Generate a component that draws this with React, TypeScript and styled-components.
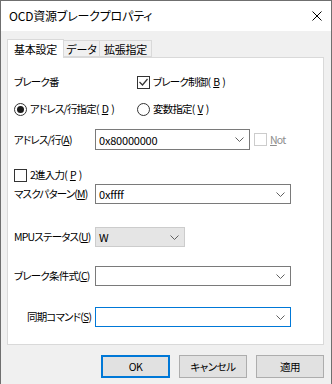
import React from "react";
import styled, { createGlobalStyle } from "styled-components";

const GlobalStyle = createGlobalStyle`
  html, body {
    margin: 0;
    padding: 0;
    background: #ffffff;
  }
  * {
    box-sizing: border-box;
  }
`;

const Window = styled.div`
  width: 332px;
  height: 384px;
  border: 1px solid #6f6f6f;
  border-bottom: none;
  background: #f0f0f0;
  display: flex;
  flex-direction: column;
  font-family: "Noto Sans CJK JP", "Noto Sans", sans-serif;
  font-size: 11px;
  font-feature-settings: "palt";
  letter-spacing: -0.2px;
  color: #000;
  overflow: hidden;
`;

const TitleBar = styled.div`
  height: 30px;
  flex: none;
  background: #fff;
  display: flex;
  align-items: center;
  padding-left: 8px;
  padding-right: 9px;
  justify-content: space-between;
`;

const Title = styled.span`
  font-size: 12px;
  line-height: 14px;
`;

const Client = styled.div`
  flex: 1;
  display: flex;
  flex-direction: column;
  padding: 8px 7px 0 6px;
`;

const TabStrip = styled.div`
  display: flex;
  align-items: flex-end;
  height: 18px;
  position: relative;
  z-index: 1;
`;

const Tab = styled.div<{ $active?: boolean; $w: number }>`
  width: ${(p) => p.$w}px;
  height: ${(p) => (p.$active ? 19 : 17)}px;
  margin-bottom: ${(p) => (p.$active ? -1 : 0)}px;
  background: ${(p) => (p.$active ? "#fff" : "#f0f0f0")};
  border: 1px solid #d9d9d9;
  border-bottom: ${(p) => (p.$active ? "none" : "1px solid #d9d9d9")};
  border-left: ${(p) => (p.$active ? "1px solid #d9d9d9" : "none")};
  display: flex;
  align-items: center;
  justify-content: center;
  line-height: 14px;
`;

const Panel = styled.div`
  height: 288px;
  background: #fff;
  border: 1px solid #d9d9d9;
  padding: 0 6px;
  display: flex;
  flex-direction: column;
`;

const Row = styled.div<{ $mt: number; $h: number }>`
  margin-top: ${(p) => p.$mt}px;
  height: ${(p) => p.$h}px;
  display: flex;
  align-items: center;
`;

const Label = styled.span<{ $w?: number; $indent?: number }>`
  width: ${(p) => p.$w ?? 81}px;
  padding-left: ${(p) => p.$indent ?? 0}px;
  flex: none;
  font-size: 10.5px;
  letter-spacing: -0.8px;
  line-height: 14px;
  white-space: nowrap;
`;

const Option = styled.label<{ $w?: number; $disabled?: boolean }>`
  width: ${(p) => (p.$w ? `${p.$w}px` : "auto")};
  flex: none;
  display: flex;
  align-items: center;
  gap: 3px;
  font-size: 10.5px;
  letter-spacing: -0.8px;
  line-height: 14px;
  white-space: nowrap;
  color: ${(p) => (p.$disabled ? "#8d8d8d" : "#000")};
`;

const Box = styled.span<{ $disabled?: boolean }>`
  width: 13px;
  height: 13px;
  border: 1px solid ${(p) => (p.$disabled ? "#cccccc" : "#333333")};
  background: #fff;
  display: flex;
  align-items: center;
  justify-content: center;
  flex: none;
`;

const Radio = styled.span<{ $on?: boolean }>`
  width: 13px;
  height: 13px;
  border-radius: 50%;
  border: 1px solid #333;
  background: #fff;
  display: flex;
  align-items: center;
  justify-content: center;
  flex: none;
  &::after {
    content: "";
    display: ${(p) => (p.$on ? "block" : "none")};
    width: 7px;
    height: 7px;
    border-radius: 50%;
    background: #1a1a1a;
  }
`;

const Combo = styled.div<{ $w: number; $h?: number; $disabled?: boolean; $focus?: boolean }>`
  width: ${(p) => p.$w}px;
  height: ${(p) => p.$h ?? 20}px;
  flex: none;
  border: 1px solid
    ${(p) => (p.$focus ? "#0078d7" : p.$disabled ? "#cccccc" : "#7a7a7a")};
  background: ${(p) => (p.$disabled ? "#e5e5e5" : "#fff")};
  display: flex;
  align-items: center;
  padding-left: 3px;
  padding-right: 5px;
  line-height: 14px;
`;

const ComboText = styled.span`
  flex: 1;
`;

const ButtonBar = styled.div`
  display: flex;
  justify-content: flex-end;
  gap: 9px;
  margin-top: 10px;
`;

const Button = styled.div<{ $default?: boolean }>`
  width: ${(p) => (p.$default ? 69 : 68)}px;
  height: 23px;
  background: #e1e1e1;
  border: ${(p) => (p.$default ? "2px solid #0078d7" : "1px solid #adadad")};
  display: flex;
  align-items: center;
  justify-content: center;
  font-size: 10.5px;
  letter-spacing: -0.5px;
  line-height: 14px;
`;

const Chevron = () => (
  <svg width="9" height="5" viewBox="0 0 9 5">
    <polyline points="0.5,0.5 4.5,4.5 8.5,0.5" fill="none" stroke="#606060" strokeWidth="1" />
  </svg>
);

const CloseIcon = () => (
  <svg width="10" height="10" viewBox="0 0 10 10">
    <path d="M0.5 0.5 L9.5 9.5 M9.5 0.5 L0.5 9.5" stroke="#000" strokeWidth="1" />
  </svg>
);

const Check = () => (
  <svg width="9" height="8" viewBox="0 0 9 8">
    <polyline points="0.5,4 3.5,7 8.5,1" fill="none" stroke="#333" strokeWidth="1.2" />
  </svg>
);

const App = () => {
  return (
    <>
      <GlobalStyle />
      <Window>
        <TitleBar>
          <Title>OCD資源ブレークプロパティ</Title>
          <CloseIcon />
        </TitleBar>
        <Client>
          <TabStrip>
            <Tab $active $w={57}>基本設定</Tab>
            <Tab $w={36}>データ</Tab>
            <Tab $w={52}>拡張指定</Tab>
          </TabStrip>
          <Panel>
            <Row $mt={14} $h={20}>
              <Label $w={123}>ブレーク番</Label>
              <Option>
                <Box>
                  <Check />
                </Box>
                ブレーク制御(<u>B</u>)
              </Option>
            </Row>
            <Row $mt={7} $h={20}>
              <Option $w={123}>
                <Radio $on />
                アドレス/行指定(<u>D</u>)
              </Option>
              <Option>
                <Radio />
                変数指定(<u>V</u>)
              </Option>
            </Row>
            <Row $mt={10} $h={21}>
              <Label>アドレス/行(<u>A</u>)</Label>
              <Combo $w={155} $h={21}>
                <ComboText>0x80000000</ComboText>
                <Chevron />
              </Combo>
              <Option $disabled style={{ marginLeft: 4 }}>
                <Box $disabled />
                <span>
                  <u>N</u>ot
                </span>
              </Option>
            </Row>
            <Row $mt={18} $h={14}>
              <Option>
                <Box />
                2進入力(<u>P</u>)
              </Option>
            </Row>
            <Row $mt={2} $h={20}>
              <Label>マスクパターン(<u>M</u>)</Label>
              <Combo $w={196}>
                <ComboText>0xffff</ComboText>
                <Chevron />
              </Combo>
            </Row>
            <Row $mt={23} $h={20}>
              <Label>MPUステータス(<u>U</u>)</Label>
              <Combo $w={90} $disabled>
                <ComboText>W</ComboText>
                <Chevron />
              </Combo>
            </Row>
            <Row $mt={19} $h={20}>
              <Label>ブレーク条件式(<u>C</u>)</Label>
              <Combo $w={196}>
                <ComboText />
                <Chevron />
              </Combo>
            </Row>
            <Row $mt={21} $h={20}>
              <Label $indent={13}>同期コマンド(<u>S</u>)</Label>
              <Combo $w={196} $focus>
                <ComboText />
                <Chevron />
              </Combo>
            </Row>
          </Panel>
          <ButtonBar>
            <Button $default>OK</Button>
            <Button>キャンセル</Button>
            <Button>適用</Button>
          </ButtonBar>
        </Client>
      </Window>
    </>
  );
};

export default App;
